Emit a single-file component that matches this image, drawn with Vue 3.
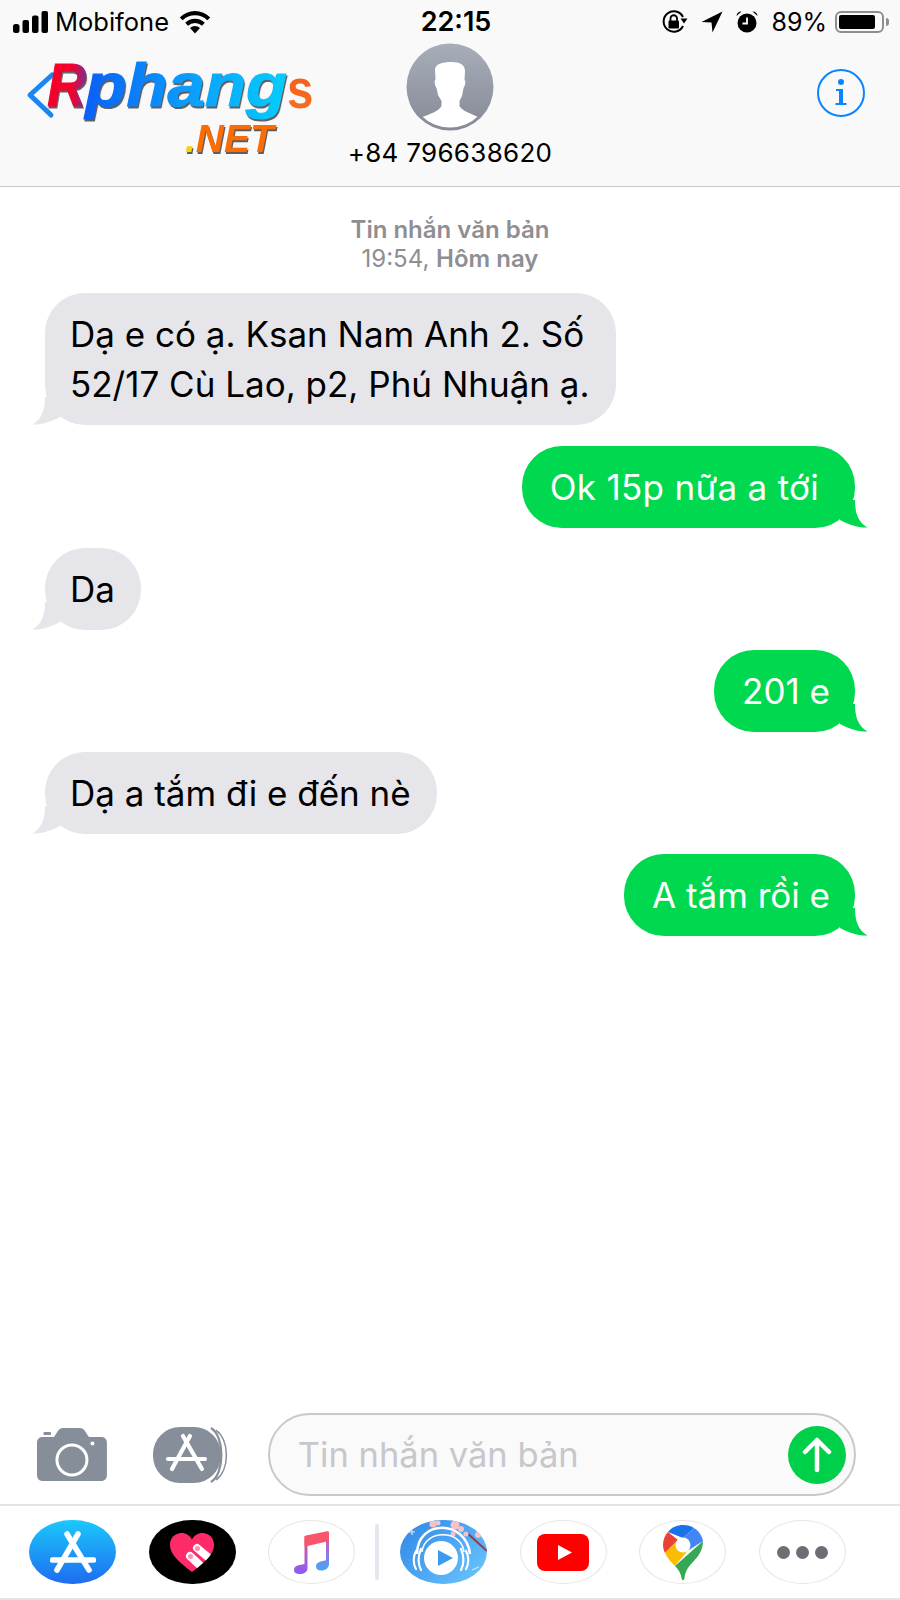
<template>
  <div class="phone">
    <header class="top">
      <div class="status">
        <div class="status-left">
          <svg class="signal" width="36" height="22" viewBox="0 0 36 22">
            <rect x="0" y="13" width="6.5" height="9" rx="2.5" />
            <rect x="9.5" y="9" width="6.5" height="13" rx="2" />
            <rect x="19" y="4.5" width="6.5" height="17.5" rx="2" />
            <rect x="28.5" y="0" width="6.5" height="22" rx="2" />
          </svg>
          <span class="carrier">Mobifone</span>
          <svg class="wifi" width="32" height="24" viewBox="0 0 32 24">
            <path d="M16 23.5 L11 18 A7.5 7.5 0 0 1 21 18 Z" />
            <path d="M6.2 12.8 A14 14 0 0 1 25.8 12.8 L23 15.8 A10 10 0 0 0 9 15.8 Z" />
            <path d="M0.8 7.4 A21.5 21.5 0 0 1 31.2 7.4 L28.3 10.3 A17.5 17.5 0 0 0 3.7 10.3 Z" />
          </svg>
        </div>
        <span class="clock">22:15</span>
        <div class="status-right">
          <svg width="26" height="24" viewBox="0 0 26 24">
            <path d="M21 16 A10.2 10.2 0 1 1 21 7" fill="none" stroke="#000" stroke-width="2" />
            <path d="M18.5 8.5 H25.5 L22 13.5 Z" />
            <rect x="6.5" y="10.5" width="10.5" height="8" rx="1.2" />
            <path d="M8.5 11 V8.5 A3.2 3.2 0 0 1 15 8.5 V11" fill="none" stroke="#000" stroke-width="1.8" />
          </svg>
          <svg class="arrow" width="22" height="22" viewBox="0 0 22 22">
            <path d="M21.5 0.5 L0.5 11 L10.5 11.5 L11.5 21.5 Z" />
          </svg>
          <svg class="alarm" width="22" height="23" viewBox="0 0 22 23">
            <circle cx="11" cy="13" r="9.5" />
            <path d="M0.5 6 A5 5 0 0 1 5.5 1.5 Z M21.5 6 A5 5 0 0 0 16.5 1.5 Z" />
            <path d="M11 7.5 V13.5 H6.5" fill="none" stroke="#fff" stroke-width="1.8" />
          </svg>
          <span class="percent">89%</span>
          <div class="battery"><div class="battery-fill" :style="{ width: '89%' }"></div></div>
          <div class="battery-nub"></div>
        </div>
      </div>

      <div class="nav">
        <!-- site watermark sits where the back button is -->
        <div class="logo">
          <svg class="logo-back" width="32" height="48" viewBox="0 0 32 48">
            <path d="M26 4 L4 24 L25 44" fill="none" stroke="#1a86f4" stroke-width="5" stroke-linecap="round" stroke-linejoin="round" />
          </svg>
          <div class="logo-line">
            <span class="logo-r">R</span><span class="logo-phang">phang</span><span class="logo-s">s</span>
          </div>
          <div class="logo-net"><span class="logo-dot">.</span>NET</div>
        </div>

        <div class="contact">
          <svg class="avatar" width="88" height="88" viewBox="0 0 88 88">
            <defs>
              <linearGradient id="avatarBg" x1="0" y1="0" x2="0" y2="1">
                <stop offset="0" stop-color="#a8adba" />
                <stop offset="1" stop-color="#858a96" />
              </linearGradient>
              <clipPath id="avatarClip"><circle cx="44" cy="44" r="40.5" /></clipPath>
            </defs>
            <circle cx="44" cy="44" r="43.5" fill="url(#avatarBg)" />
            <path clip-path="url(#avatarClip)" fill="#fff" d="M29 27 C29 21 36 19 46 19 C54 19 59 22 59 28 L58.500 37 C60 38 59.500 42 57.500 45 L56 53 L53.500 58 L53.500 63 C56 68 64 70 74 75 L74 90 L14 90 L14 75 C24 71 33 68 35.500 63 L35.500 58 L32 52 L30.500 45 C28.500 42 28 38 29.500 36 Z" />
          </svg>
          <div class="number">+84 796638620</div>
        </div>

        <svg class="info" width="50" height="50" viewBox="0 0 50 50">
          <circle cx="25" cy="25" r="23" fill="none" stroke="#0a84ff" stroke-width="2" />
          <circle cx="25" cy="14" r="3" fill="#0a84ff" />
          <path d="M20 21 H27 V35 H30.500 V37 H19.500 V35 H23 V23 H20 Z" fill="#0a84ff" />
        </svg>
      </div>
    </header>

    <main class="thread">
      <div class="stamp">
        <div class="stamp-strong">Tin nhắn văn bản</div>
        <div>19:54, <span class="stamp-strong">Hôm nay</span></div>
      </div>
      <div class="rows">
        <div v-for="msg in messages" :key="msg.text" class="row" :class="msg.me ? 'row-me' : 'row-them'">
          <div class="bubble" :class="[msg.me ? 'bubble-me' : 'bubble-them', { 'bubble-loose': msg.loose }]">
            {{ msg.text }}
            <svg class="tail" width="32" height="28" viewBox="0 0 32 28">
              <path d="M13 0 C13 13 10 22 0.500 27.500 C9 28 18 25 28 20 L32 10 L32 0 Z" />
            </svg>
          </div>
        </div>
      </div>
    </main>

    <div class="composer">
      <svg class="camera" width="70" height="53" viewBox="0 0 70 53">
        <path fill="#868e99" fill-rule="evenodd" d="M6 9 H17 L21 3 C22 1 24 0 26 0 H43 C45 0 47 1 48 3 L52 9 H64 C67.500 9 70 11 70 15 V47 C70 50.500 68 53 64 53 H6 C2.500 53 0 51 0 47 V15 C0 11 2.500 9 6 9 Z M35 15.500 A16.500 16.500 0 1 0 35 48.500 A16.500 16.500 0 1 0 35 15.500 Z M35 18.500 A13.500 13.500 0 1 1 35 45.500 A13.500 13.500 0 1 1 35 18.500 Z" />
        <rect x="6.500" y="4" width="7.500" height="3" rx="1" fill="#868e99" />
        <circle cx="55.500" cy="15.500" r="2" fill="#fff" />
      </svg>
      <svg class="apps" width="78" height="58" viewBox="0 0 78 58">
        <rect x="0" y="1" width="68" height="56" rx="27" fill="#868e99" />
        <path d="M58 2 C72 10 72 48 58 56" fill="none" stroke="#868e99" stroke-width="2.200" />
        <path d="M63 4 C77 14 77 44 63 54" fill="none" stroke="#868e99" stroke-width="1.500" />
        <g fill="none" stroke="#fff" stroke-width="4.200" stroke-linecap="round">
          <path d="M30 10 L49 43" />
          <path d="M37 10 L19 43" />
          <path d="M15 33 H52" />
        </g>
      </svg>
      <div class="field">
        <span class="placeholder">Tin nhắn văn bản</span>
        <div class="send">
          <svg width="34" height="36" viewBox="0 0 34 36">
            <path d="M5 15 L17 3 L29 15 M17 3 V33" fill="none" stroke="#fff" stroke-width="4.500" stroke-linecap="round" stroke-linejoin="round" />
          </svg>
        </div>
      </div>
    </div>

    <div class="dock">
      <div class="dock-icon store">
        <svg width="46" height="42" viewBox="0 0 46 42">
          <g fill="none" stroke="#fff" stroke-width="5.500" stroke-linecap="round">
            <path d="M17 3 L39 39" />
            <path d="M28 3 L7 39" />
            <path d="M2.500 29 H43.500" />
          </g>
        </svg>
      </div>
      <div class="dock-icon heart">
        <svg width="44" height="39" viewBox="0 0 44 39">
          <defs>
            <clipPath id="heartClip">
              <path d="M22 39 C6 27 0 20 0 11.500 C0 5 5 0 11.500 0 C16 0 20 2.500 22 6.500 C24 2.500 28 0 32.500 0 C39 0 44 5 44 11.500 C44 20 38 27 22 39 Z" />
            </clipPath>
          </defs>
          <g clip-path="url(#heartClip)">
            <rect width="44" height="39" fill="#ff2a68" />
            <path d="M27 15 L46 31 M20 23 L38 40" fill="none" stroke="#fff" stroke-width="8" stroke-linecap="round" />
            <circle cx="27.500" cy="15.500" r="2.500" fill="#ff8fae" />
            <circle cx="20.500" cy="23.500" r="2.500" fill="#ff8fae" />
          </g>
        </svg>
      </div>
      <div class="dock-icon outlined">
        <svg width="35" height="43" viewBox="0 0 35 43">
          <defs>
            <linearGradient id="noteLeft" gradientUnits="userSpaceOnUse" x1="0" y1="5" x2="0" y2="43">
              <stop offset="0" stop-color="#fa5068" />
              <stop offset="0.5" stop-color="#b65ac6" />
              <stop offset="1" stop-color="#8b5cf8" />
            </linearGradient>
            <linearGradient id="noteRight" gradientUnits="userSpaceOnUse" x1="0" y1="0" x2="0" y2="40">
              <stop offset="0" stop-color="#f5566e" />
              <stop offset="0.45" stop-color="#a86ad8" />
              <stop offset="1" stop-color="#3fa9f8" />
            </linearGradient>
          </defs>
          <path d="M10.500 5.500 H13.500 V37 C13.500 41 10 43 5.500 43 C2 43 0 41.500 0 39 C0 36 2.500 34.500 5.500 34 L10.500 33 Z" fill="url(#noteLeft)" />
          <path d="M32 1 H35 V33 C35 37 31.500 39.500 27.500 39.500 C24 39.500 22 38 22 35.500 C22 32.500 24.500 31 28 30.200 L32 29.200 Z" fill="url(#noteRight)" />
          <path d="M10.500 6 C10.500 5 11 4.700 12 4.500 L33 0.200 C34.300 0 35 0.500 35 1.800 V10 L13.500 15 H10.500 Z" fill="#f9566c" />
        </svg>
      </div>
      <div class="dock-divider"></div>
      <div class="dock-icon player">
        <svg width="87" height="64" viewBox="0 0 87 64">
          <path d="M66 12 L87 31" stroke="#8a4048" stroke-width="2" fill="none" />
          <g fill="#f6c2c8">
            <circle cx="33" cy="4" r="3.500" />
            <circle cx="38" cy="3" r="2.500" />
            <circle cx="55" cy="5" r="4.500" />
            <circle cx="61" cy="9" r="3" />
            <circle cx="53" cy="14" r="2.500" />
            <circle cx="66" cy="14" r="2.500" />
            <circle cx="78" cy="15" r="3" />
          </g>
          <path d="M17 34 C17 -1 66 -1 70 34" fill="none" stroke="#fff" stroke-width="2.500" />
          <path d="M22 32 C24 9 62 9 64 32" fill="none" stroke="#fff" stroke-width="1.500" />
          <circle cx="41" cy="38" r="17" fill="#fff" />
          <path d="M16 31 C13 36 13 44 16 49 M21 29 C18 36 18 44 21 50 M66 31 C69 36 69 44 66 49 M61 29 C64 36 64 44 61 50" fill="none" stroke="#fff" stroke-width="2.200" stroke-linecap="round" />
          <path d="M38 30 L53 38 L38 46 Z" fill="#3b9bf0" />
          <path d="M9 12 L15 12 M12 9 L12 15 M72 50 L79 47 M76 54 L81 50" stroke="#cfe8ff" stroke-width="1.200" fill="none" />
        </svg>
      </div>
      <div class="dock-icon outlined">
        <svg width="52" height="37" viewBox="0 0 52 37">
          <rect x="0" y="0" width="52" height="37" rx="8" fill="#ff0000" />
          <path d="M21 11 L35 18.500 L21 26 Z" fill="#fff" />
        </svg>
      </div>
      <div class="dock-icon outlined">
        <svg class="pin" width="40" height="56" viewBox="0 0 40 56">
          <path d="M5 7 C9 2 14 0 20 0 C25 0 28 1 31 3 L20 13 Z" fill="#1a73e8" />
          <path d="M31 3 C36 6 39 11 40 16 L26 25 L20 13 Z" fill="#4285f4" />
          <path d="M5 7 C2 10 0 15 0 20 C0 23 1 26 2 28 L15 15 Z" fill="#ea4335" />
          <path d="M2 28 C5 34 9 38 12 41 L27 23 L15 15 Z" fill="#fbbc04" />
          <path d="M40 16 C40 26 34 33 29 38 C25 42 22 47 21.500 53 C21 56 19 56 18.500 53 C18 48 15 44 12 41 Z" fill="#34a853" />
          <circle cx="20" cy="20" r="7.500" fill="#fff" />
        </svg>
      </div>
      <div class="dock-icon outlined more">
        <span class="dot"></span><span class="dot"></span><span class="dot"></span>
      </div>
    </div>
  </div>
</template>

<script setup>
const messages = [
  { text: 'Dạ e có ạ. Ksan Nam Anh 2. Số\n52/17 Cù Lao, p2, Phú Nhuận ạ.', me: false },
  { text: 'Ok 15p nữa a tới', me: true, loose: true },
  { text: 'Da', me: false },
  { text: '201 e', me: true },
  { text: 'Dạ a tắm đi e đến nè', me: false },
  { text: 'A tắm rồi e', me: true }
]
</script>

<style>
html,
body {
  margin: 0;
  background: #fff;
}
</style>

<style scoped>
.phone {
  width: 900px;
  height: 1600px;
  display: flex;
  flex-direction: column;
  background: #fff;
  font-family: Inter, "Liberation Sans", sans-serif;
  color: #000;
  overflow: hidden;
}

.top {
  height: 187px;
  box-sizing: border-box;
  background: #f9f9f9;
  border-bottom: 1px solid #c9c9cb;
  flex-shrink: 0;
}

.status {
  height: 43px;
  display: grid;
  grid-template-columns: 1fr auto 1fr;
  align-items: center;
  padding: 0 11px 0 13px;
  font-size: 25px;
}

.status-left,
.status-right {
  display: flex;
  align-items: center;
}

.status-right {
  justify-content: flex-end;
}

.status-left svg,
.status-right svg {
  fill: #000;
  display: block;
}

.carrier {
  margin-left: 6px;
  font-size: 25.5px;
}

.wifi {
  margin-left: 10px;
}

.clock {
  font-weight: 600;
  font-size: 27px;
  margin-left: 10px;
}

.arrow {
  margin-left: 13px;
}

.alarm {
  margin-left: 13px;
}

.percent {
  margin-left: 13px;
}

.battery {
  width: 49px;
  height: 22px;
  margin-left: 8px;
  box-sizing: border-box;
  border: 2px solid #8e8e8e;
  border-radius: 6px;
  padding: 2px;
}

.battery-fill {
  height: 100%;
  background: #000;
  border-radius: 2px;
}

.battery-nub {
  width: 3px;
  height: 8px;
  margin-left: 2px;
  background: #8e8e8e;
  border-radius: 0 3px 3px 0;
}

.nav {
  position: relative;
  height: 143px;
}

.logo {
  position: absolute;
  left: 28px;
  top: 6px;
  font-family: "Liberation Sans", sans-serif;
  font-weight: 700;
  font-style: italic;
  white-space: nowrap;
}

.logo-back {
  position: absolute;
  left: -2px;
  top: 22px;
  display: block;
}

.logo-line {
  position: relative;
  display: flex;
  padding-left: 14px;
  font-size: 61px;
  line-height: 73px;
}

.logo-r,
.logo-phang,
.logo-s {
  display: block;
  padding: 0 6px;
  -webkit-background-clip: text;
  background-clip: text;
  color: transparent;
  -webkit-text-stroke: 1.2px transparent;
  transform-origin: left;
}

.logo-r {
  background-image: linear-gradient(90deg, #f5002a 60%, #5a3ab8);
  transform: scaleX(0.88);
  filter: drop-shadow(1px 2px 0 rgba(40, 40, 50, 0.75));
}

.logo-phang {
  margin-left: -18.7px;
  background-image: linear-gradient(90deg, #0a5cf5, #0a9dfc 50%, #06d0fb);
  transform: scaleX(1.1);
  filter: drop-shadow(1px 2px 0 rgba(40, 40, 50, 0.75));
}

.logo-s {
  font-style: normal;
  font-size: 56px;
  margin-left: 8px;
  background-image: linear-gradient(#f4561c, #f4761c);
  transform: translateY(3px) scaleX(0.85);
  -webkit-text-stroke: 0;
}

.logo-net {
  margin-left: 157px;
  margin-top: -3px;
  font-size: 39px;
  line-height: 40px;
  color: #fb6c02;
  filter: drop-shadow(1px 2px 0 rgba(40, 40, 50, 0.75));
}

.logo-dot {
  color: #f7d400;
}

.contact {
  display: flex;
  flex-direction: column;
  align-items: center;
}

.avatar {
  display: block;
}

.number {
  font-size: 26px;
  line-height: 32px;
  letter-spacing: 0.3px;
  margin-top: 6px;
}

.info {
  position: absolute;
  left: 816px;
  top: 25px;
}

.thread {
  flex: 1;
  padding: 28px 45px 0;
}

.stamp {
  text-align: center;
  font-size: 24px;
  line-height: 29px;
  color: #8e8e93;
}

.stamp-strong {
  font-weight: 600;
}

.rows {
  display: flex;
  flex-direction: column;
  gap: 20px;
  margin-top: 20px;
}

.row {
  display: flex;
}

.row:first-child {
  margin-bottom: 1px;
}

.row-me {
  justify-content: flex-end;
}

.bubble {
  position: relative;
  font-size: 35px;
  line-height: 50px;
  border-radius: 40px;
  white-space: pre-line;
}

.bubble-them {
  padding: 16px 26px 16px 25px;
  background: #e5e5ea;
  color: #000;
}

.bubble-me {
  padding: 16px 25px 16px 28px;
  background: #00d94f;
  color: #fff;
}

.bubble-loose {
  padding-right: 36px;
  letter-spacing: 0.3px;
}

.tail {
  position: absolute;
  bottom: 0;
  display: block;
}

.bubble-them .tail {
  left: -13px;
  fill: #e5e5ea;
}

.bubble-me .tail {
  right: -13px;
  fill: #00d94f;
  transform: scaleX(-1);
}

.composer {
  height: 93px;
  box-sizing: border-box;
  display: flex;
  align-items: center;
  padding: 0 44px 6px 37px;
  flex-shrink: 0;
}

.camera {
  display: block;
}

.apps {
  display: block;
  margin-left: 46px;
}

.field {
  width: 589px;
  height: 83px;
  margin-left: 37px;
  box-sizing: border-box;
  border: 2px solid #c8c8cd;
  border-radius: 42px;
  background: #fafafa;
  display: flex;
  align-items: center;
  justify-content: space-between;
  padding: 0 8px 0 28px;
}

.placeholder {
  font-size: 34.5px;
  color: #c7c7cc;
}

.send {
  width: 58px;
  height: 58px;
  border-radius: 50%;
  background: #00cf49;
  display: flex;
  align-items: center;
  justify-content: center;
}

.send svg {
  display: block;
}

.dock {
  height: 96px;
  box-sizing: border-box;
  border-top: 2px solid #e4e4e6;
  border-bottom: 2px solid #e4e4e6;
  display: flex;
  align-items: center;
  padding-left: 29px;
  flex-shrink: 0;
}

.dock-icon {
  width: 87px;
  height: 64px;
  box-sizing: border-box;
  border-radius: 43px / 32px;
  display: flex;
  align-items: center;
  justify-content: center;
  margin-right: 32.5px;
  flex-shrink: 0;
}

.dock-icon svg {
  display: block;
}

.store {
  background: linear-gradient(#1bc8fb, #1e6cf0);
}

.heart {
  background: #000;
}

.outlined {
  background: #fff;
  border: 1.5px solid #e6e6e8;
}

.player {
  background: linear-gradient(135deg, #2f86e6, #6cc8ff);
  overflow: hidden;
}

.dock-divider {
  width: 4px;
  height: 56px;
  background: #e6e6ee;
  border-radius: 2px;
  margin-left: -12.5px;
  margin-right: 21px;
  flex-shrink: 0;
}

.pin {
  margin-top: 2px;
}

.more {
  gap: 6px;
}

.dot {
  width: 13px;
  height: 13px;
  border-radius: 50%;
  background: #6d6d75;
}
</style>
